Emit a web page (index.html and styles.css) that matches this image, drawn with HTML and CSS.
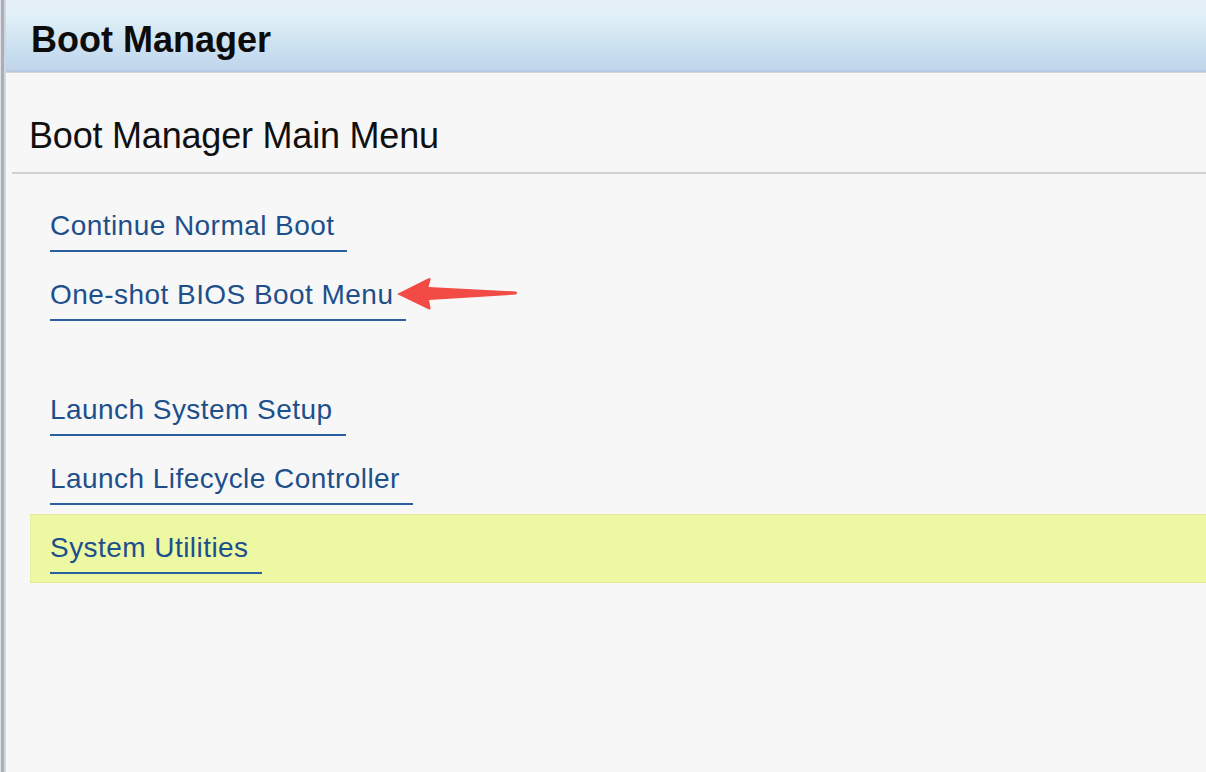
FILE: index.html
```html
<!DOCTYPE html>
<html lang="en">
<head>
<meta charset="utf-8">
<title>Boot Manager</title>
<link rel="stylesheet" href="styles.css">
</head>
<body>
<div class="frame">
  <header class="titlebar">
    <h1 class="title">Boot Manager</h1>
  </header>
  <main class="panel">
    <div class="section-head">
      <h2 class="subtitle">Boot Manager Main Menu</h2>
    </div>
    <ul class="menu">
      <li class="item"><a class="link" href="#">Continue Normal Boot</a></li>
      <li class="item item-arrow"><a class="link" href="#">One-shot BIOS Boot Menu</a>
        <svg class="arrow" width="124" height="40" viewBox="0 0 124 40" aria-hidden="true">
          <path d="M1 18 L32 2.5 Q35 1 34.5 4 L32.5 11 L120 15.5 Q122 17 120 18.5 L33 24 L34.5 31.5 Q35 34.5 32 33 Z" fill="#f24a45"/>
        </svg>
      </li>
      <li class="spacer" aria-hidden="true"></li>
      <li class="item"><a class="link" href="#">Launch System Setup</a></li>
      <li class="item"><a class="link" href="#">Launch Lifecycle Controller</a></li>
      <li class="item item-selected"><a class="link" href="#">System Utilities</a></li>
    </ul>
  </main>
</div>
</body>
</html>
```

FILE: styles.css
```css
html, body {
  margin: 0;
  padding: 0;
  height: 100%;
  background: #f7f7f7;
}

body {
  font-family: "Liberation Sans", Arial, sans-serif;
  overflow: hidden;
}

.frame {
  min-height: 772px;
  padding-left: 6px;
  background: #f7f7f7;
  box-shadow: inset 1px 0 #dfe1e7, inset 4px 0 #a9aebb, inset 6px 0 #d3d6de;
  box-sizing: border-box;
}

.titlebar {
  background: linear-gradient(to bottom, #e5eff8 0%, #e2f1f9 20%, #d6e8f2 45%, #cadff0 70%, #c1d5ea 100%);
  border-bottom: 2px solid #b9cbe4;
  box-shadow: 0 1px 0 #d4d6dc;
  box-sizing: border-box;
  padding: 20px 0 0 25px;
  height: 72px;
}

.title {
  margin: 0;
  font-size: 36px;
  line-height: 40px;
  font-weight: bold;
  color: #0c0c0c;
}

.panel {
  display: block;
}

.section-head {
  margin: 44px 0 0 6px;
  padding: 0 0 16px 17px;
  border-bottom: 2px solid #d0d0d0;
}

.subtitle {
  margin: 0;
  font-size: 36px;
  line-height: 40px;
  font-weight: normal;
  color: #101010;
  letter-spacing: -0.2px;
}

.menu {
  list-style: none;
  margin: 18px 0 0 24px;
  padding: 0;
}

.item {
  position: relative;
  height: 69px;
  box-sizing: border-box;
  padding: 18px 0 0 20px;
}

.spacer {
  height: 46px;
}

.link {
  display: inline-block;
  font-size: 28px;
  line-height: 32px;
  letter-spacing: 0.45px;
  color: #1d4f8b;
  text-decoration: none;
  padding: 0 13px 8px 0;
  border-bottom: 2px solid #2a60a0;
}

.item-selected {
  background: #edf8a3;
  box-shadow: inset 0 1px 0 #e0eb96, inset 0 -1px 0 #e0eb96, inset 1px 0 #e6f09c;
}

.arrow {
  position: absolute;
  left: 366px;
  top: 15px;
}
```
